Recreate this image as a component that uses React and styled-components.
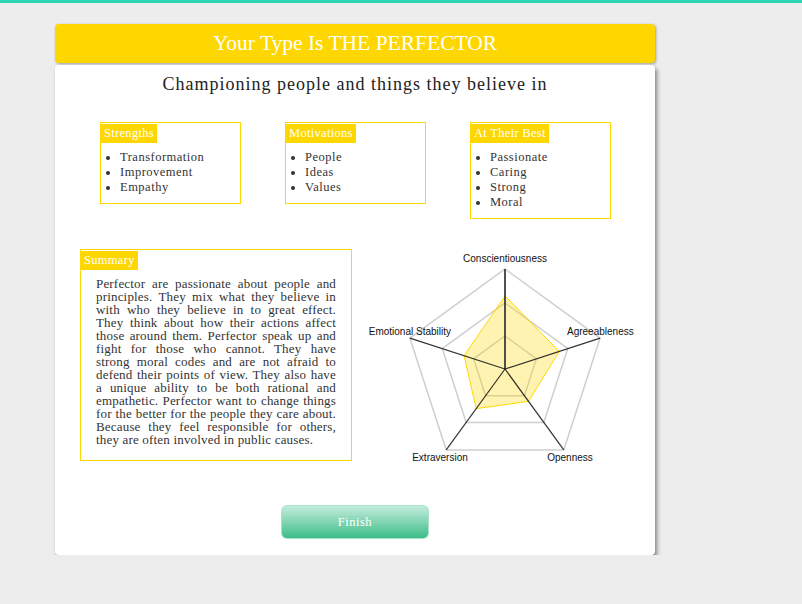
import styled, { createGlobalStyle } from "styled-components";

const GlobalStyle = createGlobalStyle`
  body {
    margin: 0;
    background: #ededed;
    font-family: "Liberation Serif", serif;
  }
`;

const traits = [
  { label: "Strengths", items: ["Transformation", "Improvement", "Empathy"] },
  { label: "Motivations", items: ["People", "Ideas", "Values"] },
  { label: "At Their Best", items: ["Passionate", "Caring", "Strong", "Moral"] },
];

const axes = [
  { name: "Conscientiousness", value: 73, lx: 0, ly: -107, anchor: "middle" },
  { name: "Agreeableness", value: 57, lx: 62, ly: -34, anchor: "start" },
  { name: "Openness", value: 40, lx: 65, ly: 92, anchor: "middle" },
  { name: "Extraversion", value: 49, lx: -65, ly: 92, anchor: "middle" },
  { name: "Emotional Stability", value: 43, lx: -54, ly: -34, anchor: "end" },
];

const CX = 140;
const CY = 120;
const R = 100;

function point(i, r) {
  const a = (-90 + i * 72) * (Math.PI / 180);
  return [CX + r * Math.cos(a), CY + r * Math.sin(a)];
}

function ring(r) {
  return axes.map((_, i) => point(i, r).join(",")).join(" ");
}

function RadarChart() {
  const shape = axes.map((a, i) => point(i, a.value).join(",")).join(" ");
  return (
    <Chart width="280" height="216" viewBox="0 0 280 216">
      {[33, 66, 100].map((r) => (
        <polygon key={r} points={ring(r)} fill="none" stroke="#cfcfcf" strokeWidth="1.5" />
      ))}
      <polygon points={shape} fill="rgba(255,215,0,0.3)" stroke="#ffd700" strokeWidth="1" />
      {axes.map((a, i) => {
        const [x, y] = point(i, R);
        return (
          <line
            key={a.name}
            x1={CX}
            y1={CY}
            x2={x}
            y2={y}
            stroke={i === 0 ? "#333" : "#111"}
            strokeWidth={i === 0 ? 2 : 1.2}
            strokeOpacity={0.85}
          />
        );
      })}
      {axes.map((a) => (
        <text
          key={a.name}
          x={CX + a.lx}
          y={CY + a.ly}
          textAnchor={a.anchor}
          fontFamily="Liberation Sans, Arial, sans-serif"
          fontSize="10"
          fill="#111"
        >
          {a.name}
        </text>
      ))}
    </Chart>
  );
}

export default function App() {
  return (
    <>
      <GlobalStyle />
      <TopBar />
      <Wrapper>
        <Header>Your Type Is THE PERFECTOR</Header>
        <Card>
          <Tagline>Championing people and things they believe in</Tagline>
          <TraitRow>
            {traits.map((t) => (
              <TraitBox key={t.label}>
                <BoxLabel>{t.label}</BoxLabel>
                <TraitList>
                  {t.items.map((item) => (
                    <li key={item}>{item}</li>
                  ))}
                </TraitList>
              </TraitBox>
            ))}
          </TraitRow>
          <DetailRow>
            <SummaryBox>
              <BoxLabel>Summary</BoxLabel>
              <SummaryText>
                Perfector are passionate about people and principles. They mix
                what they believe in with who they believe in to great effect.
                They think about how their actions affect those around them.
                Perfector speak up and fight for those who cannot. They have
                strong moral codes and are not afraid to defend their points of
                view. They also have a unique ability to be both rational and
                empathetic. Perfector want to change things for the better for
                the people they care about. Because they feel responsible for
                others, they are often involved in public causes.
              </SummaryText>
            </SummaryBox>
            <RadarChart />
          </DetailRow>
          <FinishButton>Finish</FinishButton>
        </Card>
      </Wrapper>
    </>
  );
}

const TopBar = styled.div`
  height: 3px;
  background: #2dd3b3;
`;

const Wrapper = styled.div`
  width: 600px;
  margin: 21px 0 0 55px;
`;

const Header = styled.div`
  height: 39px;
  background: #ffd700;
  border-radius: 4px;
  box-shadow: 1px 1px 3px rgba(0, 0, 0, 0.35);
  color: #fff;
  font-size: 21.5px;
  line-height: 39px;
  text-align: center;
`;

const Card = styled.div`
  margin-top: 2px;
  height: 490px;
  background: #fff;
  border-radius: 4px;
  box-shadow: 2px 3px 4px rgba(0, 0, 0, 0.45);
  display: flex;
  flex-direction: column;
  box-sizing: border-box;
  padding-top: 8px;
`;

const Tagline = styled.h2`
  margin: 0;
  font-weight: normal;
  font-size: 18px;
  letter-spacing: 1px;
  color: #222;
  text-align: center;
  line-height: 22px;
`;

const TraitRow = styled.div`
  display: flex;
  align-items: flex-start;
  gap: 44px;
  padding-left: 45px;
  margin-top: 27px;
`;

const TraitBox = styled.div`
  width: 139px;
  border: 1px solid #ffd700;
  padding-bottom: 8px;
`;

const BoxLabel = styled.span`
  display: inline-block;
  background: #ffd700;
  color: #fff;
  font-size: 12.5px;
  letter-spacing: 0.3px;
  line-height: 19px;
  padding: 0 3px;
`;

const TraitList = styled.ul`
  margin: 7px 0 0;
  padding-left: 19px;
  font-size: 12.5px;
  letter-spacing: 0.5px;
  line-height: 15px;
  color: #333;
`;

const DetailRow = styled.div`
  display: flex;
  align-items: flex-start;
  margin-top: 30px;
  padding-left: 25px;
`;

const SummaryBox = styled.div`
  width: 270px;
  height: 210px;
  border: 1px solid #ffd700;
`;

const SummaryText = styled.p`
  margin: 7px 15px 0 15px;
  font-size: 13px;
  letter-spacing: 0.18px;
  line-height: 13px;
  text-align: justify;
  color: #333;
`;

const Chart = styled.svg`
  margin-left: 13px;
  display: block;
`;

const FinishButton = styled.button`
  align-self: center;
  margin-top: 40px;
  width: 148px;
  height: 34px;
  border: 1px solid #a8e3cb;
  border-radius: 6px;
  background: linear-gradient(to bottom, #c4ecdc, #3dbd88);
  color: #fff;
  font-family: "Liberation Serif", serif;
  font-size: 12.5px;
  letter-spacing: 0.5px;
  cursor: pointer;
`;
